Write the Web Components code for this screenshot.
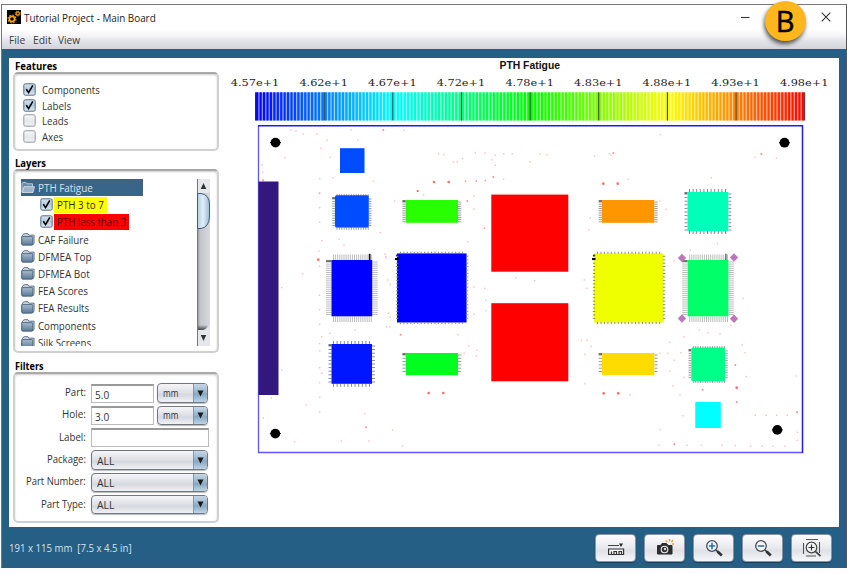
<!DOCTYPE html>
<html lang="en">
<head>
<meta charset="utf-8">
<title>Tutorial Project - Main Board</title>
<style>
html,body{margin:0;padding:0}
body{width:847px;height:574px;overflow:hidden;background:#fdfdfd;font:11.5px "Open Sans","Noto Sans",sans-serif;color:#333;position:relative}
</style>
</head>
<body>
<app-window></app-window>
<call-out>B</call-out>
<script>
class Base extends HTMLElement{
  constructor(){super();this.attachShadow({mode:'open'});}
  set html(s){this.shadowRoot.innerHTML=s;}
}
const def=(n,c)=>customElements.define(n,c);

/* Text squeezed or stretched to a set advance width */
def('fit-text',class extends Base{
  connectedCallback(){
    const w=+this.getAttribute('w');
    this.html=`<style>:host{display:block;width:${w}px;white-space:nowrap;flex:none}span{display:inline-block;transform-origin:0 50%;white-space:pre}</style><span><slot></slot></span>`;
    const s=this.shadowRoot.querySelector('span');
    requestAnimationFrame(()=>{const r=s.offsetWidth;if(r)s.style.transform=`scaleX(${w/r})`;});
  }
});

def('call-out',class extends Base{
  connectedCallback(){this.html=`<style>:host{position:absolute;left:764.5px;top:1px;width:41px;height:40px;border-radius:50%;background:#fdb61c;box-shadow:-1px 3px 4px rgba(0,0,0,.65);color:#000;font:29px/40px "Open Sans",sans-serif;text-align:center;-webkit-text-stroke:.5px #000}</style><slot></slot>`;}
});

def('app-window',class extends Base{
  connectedCallback(){this.html=`<style>
  :host{display:flex;flex-direction:column;box-sizing:border-box;width:846px;height:564px;margin:4px 0 0 1px;border:1px solid #707070;border-color:#777 #555 #4a5560 #777;background:#265f85}
  main{flex:1;display:flex;background:#fff;margin:9px 7px 0 7px;min-height:0;overflow:hidden}
  aside{width:213px;flex:none;display:flex;flex-direction:column;padding-left:4px;box-sizing:border-box}
  </style><title-bar></title-bar><menu-bar></menu-bar>
  <main><aside>
    <group-panel name="Features" tw="42" h="79" style="--gap:0px"><check-list></check-list></group-panel>
    <group-panel name="Layers" tw="31" h="184" style="--gap:4px"><layer-tree></layer-tree></group-panel>
    <group-panel name="Filters" tw="29" h="151" style="--gap:5px"><filter-form></filter-form></group-panel>
  </aside><board-view></board-view></main>
  <status-bar></status-bar>`;}
});

def('title-bar',class extends Base{
  connectedCallback(){this.html=`<style>:host{display:flex;align-items:center;box-sizing:border-box;height:25px;flex:none;background:#fff;color:#222;padding:0 0 1px 5px}
  .logo{margin:0 3px 0 0}fit-text{flex:none}.min{margin:0 71px 0 auto}.x{margin-right:15px}svg{display:block}</style>
  <svg class="logo" width="14" height="14"><rect width="14" height="14" fill="#000"/><g fill="none" stroke="#f5a313"><circle cx="5" cy="9" r="2.6" stroke-width="1.7"/><circle cx="5" cy="9" r="3.9" stroke-width="1.2" stroke-dasharray="1.5 1.56"/><circle cx="10.7" cy="3.5" r="1.6" stroke-width="1.2"/><circle cx="10.7" cy="3.5" r="2.5" stroke-width="1" stroke-dasharray="1 .96"/></g></svg>
  <fit-text w="132">Tutorial Project - Main Board</fit-text>
  <svg class="min" width="9" height="9"><path d="M0 4.500h8.500" stroke="#333" stroke-width="1.100"/></svg>
  <svg class="x" width="10" height="10"><path d="M.7.7l8.600 8.600M9.300.7L.7 9.300" stroke="#333" stroke-width="1.100"/></svg>`;}
});

def('menu-bar',class extends Base{
  connectedCallback(){this.html=`<style>:host{display:flex;align-items:center;gap:7.500px;height:19px;flex:none;padding-left:7px;background:linear-gradient(#fff,#f2f2f5 35%,#e4e5ea 55%,#d2d4db);color:#3c3c3c;line-height:17px}</style>
  <fit-text w="16">File</fit-text><fit-text w="18">Edit</fit-text><fit-text w="22">View</fit-text>`;}
});

def('group-panel',class extends Base{
  connectedCallback(){const g=k=>this.getAttribute(k);this.html=`<style>:host{display:block;flex:none;margin-top:var(--gap)}
  h2{margin:0 0 0 2px;height:14px;font-size:11px;line-height:15px;font-weight:700;color:#000}
  section{box-sizing:border-box;height:${g('h')}px;width:206px;border:2px solid #d0d0d0;border-top-color:#a9a9a9;border-radius:5px;box-shadow:inset 0 1px 2px #ccc;overflow:hidden}</style>
  <h2><fit-text w="${g('tw')}">${g('name')}</fit-text></h2><section><slot></slot></section>`;}
});

def('check-box',class extends Base{
  connectedCallback(){const on=this.hasAttribute('on');this.html=`<style>:host{display:block;flex:none;width:13px;height:13px}svg{display:block}</style>
  <svg width="13" height="13"><defs><linearGradient id="g" x2="0" y2="1"><stop stop-color="${on?'#d9e4ee':'#fbfbfc'}"/><stop offset=".5" stop-color="${on?'#b3c8db':'#e6e8ee'}"/><stop offset="1" stop-color="${on?'#dbe8f2':'#eff0f4'}"/></linearGradient></defs>
  <rect x=".8" y=".8" width="11.400" height="11.400" rx="1.500" fill="url(#g)" stroke="${on?'#56708a':'#94989f'}" stroke-width="1"/>
  ${on?'<path d="M3.300 6.200L5.600 9.600L9.800 2.400" fill="none" stroke="#000" stroke-width="1.600"/>':''}</svg>`;}
});

def('check-list',class extends Base{
  connectedCallback(){this.html=`<style>:host{display:flex;flex-direction:column;padding:8px 0 0 7.500px}div{display:flex;align-items:center;height:15.600px;gap:6.500px}</style>
  ${[['Components',58,1],['Labels',29,1],['Leads',26,0],['Axes',21,0]].map(([t,w,o])=>`<div><check-box ${o?'on':''}></check-box><fit-text w="${w}">${t}</fit-text></div>`).join('')}`;}
});

def('folder-icon',class extends Base{
  connectedCallback(){const o=this.hasAttribute('open');this.html=`<style>:host{display:block;width:14px;height:13px;flex:none}svg{display:block}</style><svg width="14" height="13"><defs><linearGradient id="f" x2="0" y2="1"><stop stop-color="#a9bccd"/><stop offset="1" stop-color="#587898"/></linearGradient></defs>
  ${o?'<path d="M1 11V2.500q0-1 1-1h3l1 1.300h5.500v3" fill="#6b8aa6" stroke="#c3d1de" stroke-width=".9"/><path d="M1 11.500L3 5.700h10.500L12 11.500z" fill="#9db4c8" stroke="#dbe5ee" stroke-width=".8"/>'
  :'<path d="M.8 11V3.500L2.500 1q.3-.4 1-.4h3.300l1 1.500h5.300V10l-1.400 2" fill="#c4d0dc" stroke="#4d657d" stroke-width=".8"/><path d="M.8 4.300q0-.7.800-.7h9.400q.8 0 .8.7v7q0 .9-.9.9H1.700q-.9 0-.9-.9z" fill="url(#f)" stroke="#3f5871" stroke-width=".8"/>'}</svg>`;}
});

def('layer-tree',class extends Base{
  connectedCallback(){
    const rest=[['CAF Failure',51],['DFMEA Top',54],['DFMEA Bot',52],['FEA Scores',50],['FEA Results',51],['Components',58],['Silk Screens',53]];
    this.html=`<style>:host{display:flex;padding:8px 0 0 6px}
    .tree{width:176px;height:167px;overflow:hidden;flex:none}
    .r{display:flex;align-items:center;height:17.200px;gap:3px;font-size:11.500px}
    .sel{background:#376688;color:#d5e2ec;width:122px}
    .c{padding-left:19px;gap:1px;color:#222}
    mark{color:#332a00;height:16px;line-height:16px;padding:0 3px}</style>
    <div class="tree"><div class="r sel"><folder-icon open></folder-icon><fit-text w="55">PTH Fatigue</fit-text></div>
    <div class="r c"><check-box on></check-box><mark style="background:#ff0"><fit-text w="47">PTH 3 to 7</fit-text></mark></div>
    <div class="r c"><check-box on></check-box><mark style="background:#f00;color:#5a0000"><fit-text w="69">PTH less than 3</fit-text></mark></div>
    ${rest.map(([t,w])=>`<div class="r"><folder-icon></folder-icon><fit-text w="${w}">${t}</fit-text></div>`).join('')}</div><scroll-bar></scroll-bar>`;}
});

def('scroll-bar',class extends Base{
  connectedCallback(){this.html=`<style>:host{display:block;width:13px;height:167px}svg{display:block}</style>
  <svg width="13" height="167"><defs><linearGradient id="t"><stop stop-color="#8d8f94"/><stop offset=".25" stop-color="#c4c5ca"/><stop offset="1" stop-color="#d8d9dd"/></linearGradient>
  <linearGradient id="u"><stop stop-color="#b4cce0"/><stop offset=".45" stop-color="#e2effa"/><stop offset="1" stop-color="#9ab9d2"/></linearGradient>
  <linearGradient id="e" x2="0" y2="1"><stop stop-color="#444" stop-opacity="0"/><stop offset="1" stop-color="#444"/></linearGradient></defs>
  <rect width="13" height="167" fill="#e6e7eb"/><path d="M0 14H13V144Q12 151 5 151H0z" fill="url(#t)"/><path d="M0 146H11Q9 151 5 151H0z" fill="url(#e)"/>
  <path d="M.5 0V167" stroke="#777"/><path d="M.5 14.500H4Q12.500 16 12.500 25V38Q12 48 4 49.500H.5z" fill="url(#u)" stroke="#3f5f7c"/>
  <path d="M6.500 4L9.300 10H3.700zM6.500 162L9.300 156H3.700z" fill="#333"/></svg>`;}
});

def('text-field',class extends Base{
  connectedCallback(){this.html=`<style>:host{display:flex;align-items:center;box-sizing:border-box;height:19px;width:${this.getAttribute('w')}px;border:1px solid #bbb;border-top:2px solid #999;background:#fff;padding:1px 0 0 3px;color:#333;flex:none}</style><slot></slot>`;}
});
def('combo-box',class extends Base{
  connectedCallback(){this.html=`<style>:host{display:flex;align-items:center;box-sizing:border-box;height:19.500px;width:${this.getAttribute('w')}px;border:1px solid #71777f;border-radius:4px;background:linear-gradient(#f6f6f9,#dddfe5 50%,#d5d8df 60%,#f0f2f5);box-shadow:0 1px 1px #bbb;padding-left:5px;flex:none;overflow:hidden;color:#333}
  i{margin-left:auto;width:13px;height:100%;background:linear-gradient(#c8d8e6,#94b1c9 50%,#87a8c2 58%,#bfd5e6);border-left:1px solid #7e9ab2;display:flex;justify-content:center;align-items:center}</style><slot></slot><i><svg width="7" height="7"><path d="M.5 .5h6L3.500 6.500z" fill="#1a1a1a"/></svg></i>`;}
});

def('filter-form',class extends Base{
  connectedCallback(){
    const rows=[['Part:',21,'5.0'],['Hole:',24,'3.0'],['Label:',27],['Package:',39],['Part Number:',60],['Part Type:',45]];
    this.html=`<style>:host{display:flex;flex-direction:column;padding:8px 0 0 0}
    .r{display:flex;align-items:center;height:22.300px}.l{width:71px;display:flex;justify-content:flex-end;margin-right:5px;margin-top:-3px}combo-box.s{margin-left:3px}</style>
    ${rows.map(([t,w,v],i)=>`<div class="r"><div class="l"><fit-text w="${w}">${t}</fit-text></div>${
      i<2?`<text-field w="63"><fit-text w="14">${v}</fit-text></text-field><combo-box class="s" w="51" style="font-size:10.500px"><fit-text w="15">mm</fit-text></combo-box>`
      :i==2?'<text-field w="118"></text-field>':'<combo-box w="117"><fit-text w="17">ALL</fit-text></combo-box>'}</div>`).join('')}`;}
});

def('tool-button',class extends Base{
  connectedCallback(){this.html=`<style>:host{display:flex;align-items:center;justify-content:center;box-sizing:border-box;width:41px;height:28px;border:1px solid #8d949d;border-radius:4px;background:linear-gradient(#fdfdfe,#e8e9ee 50%,#dfe1e7 60%,#f6f7f9);box-shadow:0 1px 1px #173f5b}</style><slot></slot>`;}
});

def('status-bar',class extends Base{
  connectedCallback(){
    const lens='<circle cx="8" cy="8" r="5.300" fill="#f3f6fa" stroke="#4a4f55" stroke-width="1.300"/><path d="M12 12l2.500 2.300" stroke="#333" stroke-width="1.600"/><path d="M13.500 13.500l4.300 4" stroke="#333" stroke-width="2.800"/>';
    this.html=`<style>:host{display:flex;height:40px;flex:none;align-items:center;padding:0 14px 0 7px;color:#d3e3ee}
    .b{display:flex;gap:8px;margin:1px 0 0 auto}svg{display:block}fit-text{padding-top:1px}</style>
    <fit-text w="123">191 x 115 mm  [7.5 x 4.5 in]</fit-text>
    <div class="b">
    <tool-button><svg width="20" height="20"><path d="M2 7.500h11" stroke="#444"/><path d="M13 5.500h4L15 9z" fill="#222"/><path d="M2.600 16.500V11h15v5.500z" fill="#f5f5f7" stroke="#333" stroke-width="1.200"/><path d="M5.500 17v-3.500M8 17v-3.500h2.500V17M13 17v-3.500h2.500V17" fill="none" stroke="#333" stroke-width="1.200"/></svg></tool-button>
    <tool-button><svg width="20" height="20"><path d="M2.500 7.500h3l1.500-2h4.500L13 7.500h4v8.500H2.500z" fill="#2d2d2f" stroke="#2d2d2f" stroke-linejoin="round"/><circle cx="9.500" cy="11.500" r="3.300" fill="#333" stroke="#eee" stroke-width="1.100"/><circle cx="10" cy="11" r="1.200" fill="#ddd"/><path d="M11 2.500l1 1.500M14.500 1v2.500M18 2l-1.500 2M19 6h-2" stroke="#e2a04a" stroke-width="1.500"/></svg></tool-button>
    <tool-button><svg width="20" height="20">${lens}<path d="M8 4.800v6.400M4.800 8h6.400" stroke="#2674b8" stroke-width="1.600"/></svg></tool-button>
    <tool-button><svg width="20" height="20">${lens}<path d="M4.800 8h6.400" stroke="#2674b8" stroke-width="1.600"/></svg></tool-button>
    <tool-button><svg width="22" height="20"><path d="M5 1.500h12M5 18h10M2.500 5v11M18.500 4v11" stroke="#555" stroke-width="1.100"/><circle cx="10.500" cy="9.500" r="5.300" fill="#f4f5f7" stroke="#444" stroke-width="1.200"/><path d="M10.500 6.500v6M7.500 9.500h6" stroke="#333" stroke-width="1.200"/><path d="M14.300 13.300l5.200 4.700" stroke="#444" stroke-width="1.700"/></svg></tool-button>
    </div>`;}
});

/* Board plot: legend scale, board outline, parts with leads, drill dots */
def('board-view',class extends Base{
  connectedCallback(){
    let s='';
    const rect=(x,y,x2,y2,f,e='')=>s+=`<rect x="${x}" y="${y}" width="${x2-x}" height="${y2-y}" fill="${f}" ${e}/>`;
    const x0=255.3,step=68.64,n=160;
    for(let i=0;i<n;i++){
      const x=x0+i*step/20,h=240-240*i/n,c=`hsl(${h.toFixed(1)} 100% 50%)`;
      rect(x,92.3,x+step/20+.1,120.5,c,'opacity=".4"');rect(x+.8,92.3,x+3,120.5,c);
    }
    for(let k=0;k<9;k++){const x=x0+k*step;rect(x-.3,92.3,x+.8,120.5,'#000','opacity=".75"');}
    ['4.57','4.62','4.67','4.72','4.78','4.83','4.88','4.93','4.98'].forEach((t,k)=>s+=`<text x="${(230.8+k*step).toFixed(1)}" y="86" textLength="48.500" lengthAdjust="spacingAndGlyphs" font-family="DejaVu Serif" font-size="10" fill="#1c1c1c">${t}e+1</text>`);
    s+=`<text x="499.500" y="69" textLength="60.500" lengthAdjust="spacingAndGlyphs" font-family="Liberation Sans" font-weight="700" font-size="10.500" fill="#111">PTH Fatigue</text>`;
    s+='<path d="M258.500 125.500V452.500H802.500" fill="none" stroke="#5858ff" stroke-width="1.300"/><path d="M258 125.700H802.500V453" fill="none" stroke="#1a1aff" stroke-width="1.500"/>';
    const dots=[
     [225,55,'198,225 213,228 234,237 276,237 378,225 475,225,1 537,225 306,256 398,256 288,280 180,308 316,307 112,330 113,352 114,376,1 284,371 324,368 445,379 284,414 578,408,1 627,381,2 671,381,2 721,379 754,379 781,377 805,366,1 836,373 641,296 656,299 685,321 697,320 713,311 751,294 780,294 811,301 800,314 811,331 836,296 862,296 915,320'],
     [530,55,'30,297 52,299 391,239 194,304 238,297 250,294,1 243,301 295,373 220,386,2 263,386,2 544,368 676,307 694,297,1 739,309'],
     [380,60,'282,407 282,447 314,505 631,474 626,510 407,654 464,662 314,685 317,721 317,752 613,660 621,685 604,841 621,841 615,883'],
     [250,180,'647,3 679,3 706,1 209,40 503,33,1 521,45 434,63 652,63,1 209,83 209,127 703,145 391,158 215,182 282,196 267,178 653,185 207,214 205,239,2 209,259 407,229 405,222 409,234 158,282 95,323 413,300 421,313 672,321 209,346 209,389 672,403 415,400 421,412 209,433 410,440 420,440 315,450 239,460 215,470 452,464,1 624,464 656,498 679,528 681,511 643,520 209,491 209,512 209,563 215,580 95,570 209,608 209,652 536,639,2 580,639,2 64,654'],
     [250,330,'209,245 169,225 40,264 344,251 348,292,1 428,300 134,336 274,333 357,333 458,348'],
     [590,180,'209,63 228,88 301,210 252,242 382,191 459,355 423,436 328,450 354,459 390,461 282,471 239,487 4,499 457,495 465,518 209,520 233,520 273,518 253,541 239,574 436,555,1 469,590 282,592 249,618 270,644 338,629,1 440,623,2 619,588 41,640,2 85,640,2 121,644'],
     [530,330,'165,161 620,216,1 459,257 676,256 709,256 740,256 772,256 801,247,1 391,299 388,346 433,343,1 471,346 514,346 576,346 616,347 662,348 697,348 729,349 765,348 802,307 802,331']];
    for(const [ox,oy,l] of dots)for(const p of l.split(' ')){const [a,b,k=0]=p.split(',').map(Number);const r=[.8,1,1.35][k];
      s+=`<circle cx="${(ox+a/3).toFixed(1)}" cy="${(oy+b/3).toFixed(1)}" r="${r}" fill="#ff2020" opacity="${[.33,.5,.65][k]}"/>`;}
    /* leads: rows of short ticks on the horizontal and vertical edges */
    const leads=(x,y,x2,y2,len,p,tb,col='#888')=>{
      let d='';
      for(let v=y+2;v<y2-.5;v+=p)d+=`M${x-len} ${v.toFixed(1)}H${x}M${x2} ${v.toFixed(1)}h${len}`;
      if(tb)for(let v=x+2;v<x2-.5;v+=p)d+=`M${v.toFixed(1)} ${y-len}V${y}M${v.toFixed(1)} ${y2}v${len}`;
      s+=`<path d="${d}" stroke="${col}" stroke-width="1"/><path d="M${x-len} ${y+1}h${len}" stroke="#333" stroke-width="1.300"/>`;};
    rect(258.5,181.5,278.5,395,'#32187d');
    rect(340,148.2,364.5,173,'#004cff');
    leads(335,197,368.7,227,2.8,2.4,1,'#999');rect(335,195.3,368.8,227.6,'#004cff','rx="1.500"');
    for(const [x,y,y2,c] of [[405.7,200,222.800,'#28ff00'],[405.7,353,375.2,'#00ff1e'],[602,200,222.800,'#ff9600'],[602,353,375.2,'#ffdc00']]){
      leads(x,y,x+52.3,y2,3.3,y<300?2.2:3.3,0,'#999');rect(x,y,x+52.3,y2,c);}
    for(const [x,c] of [[331.5,'#0000ff'],[687.7,'#00ff68']]){
      leads(x,260,x+40.7,316.5,5.5,2.1,1,'#bdbdbd');rect(x,260,x+40.7,316.3,c);rect(x+37.3,253.8,x+39,260,c=='#0000ff'?'#111':'#777');}
    for(const [x,c] of [[397,'#0000ff'],[594,'#f0ff00']]){
      rect(x,253.5,x+69.6,322.5,c);leads(x+1.5,254.3,x+68.7,321.5,2.6,3.45,1,'#8a8a8a');
      rect(x+1.5,253.8,x+68.5,322,c);rect(x-2,258,x+1.5,260,'#000');}
    leads(331.5,344,372,383.8,3,3.6,1);rect(331.5,344,372,383.8,'#0016ff');
    leads(687.5,192,728.3,231,3,3.6,1);rect(687.5,192,728.3,231.2,'#00ffb8');
    leads(691.3,349,725,380,2.8,2.4,1,'#999');rect(691.3,347.6,725,381,'#00ff88','rx="1.500"');
    rect(491.3,194.6,568.3,271.7,'#f00');rect(491.3,303.2,568.3,381.3,'#f00');
    rect(695.3,402,720.8,428,'#0ff');
    for(const [x,y] of [[682,258],[734,257.5],[682,318.5],[734,318.7]])s+=`<path d="M${x} ${y-4.200}L${x+4.200} ${y}L${x} ${y+4.200}L${x-4.200} ${y}z" fill="#bd78bd"/>`;
    for(const [x,y] of [[275.5,142.6],[784.5,142.7],[275.3,433.6],[777.3,429.9]])s+=`<circle cx="${x}" cy="${y}" r="4.900" fill="#000"/><path d="M${x-5.500} ${y}h11" stroke="#000"/>`;
    this.html=`<style>:host{display:block;flex:1;min-width:0}svg{display:block}</style><svg width="616" height="469" viewBox="222 58 616 469">${s}</svg>`;}
});
</script>
</body>
</html>
